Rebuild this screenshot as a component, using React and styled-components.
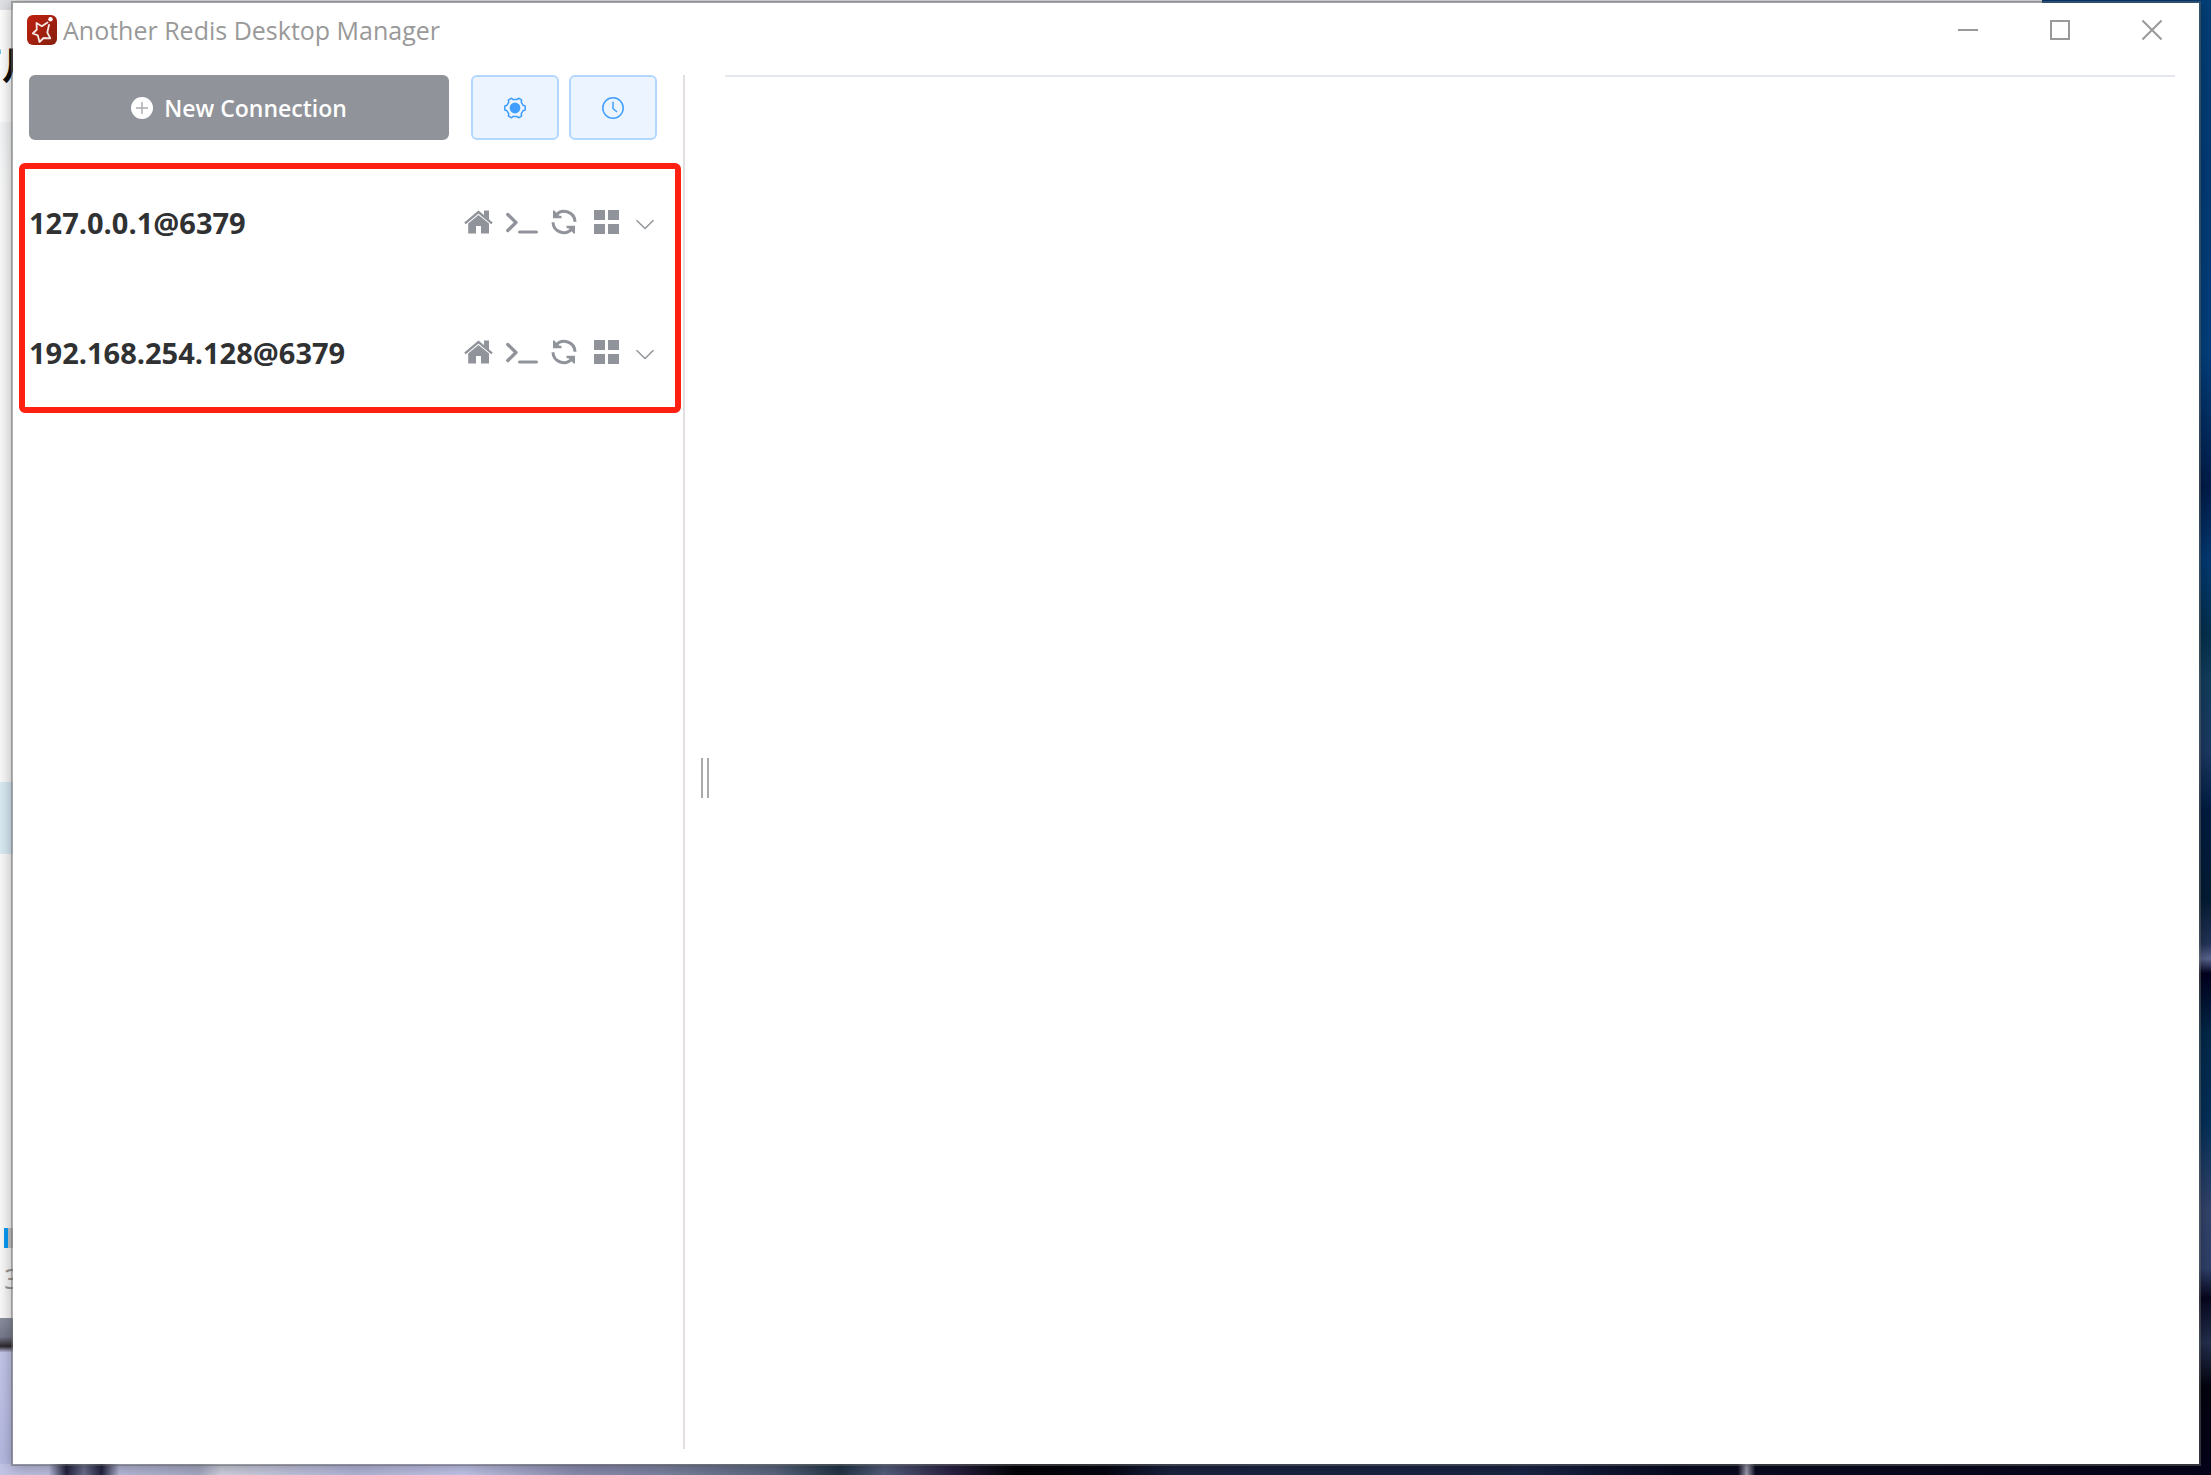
import React from 'react';
import styled, { createGlobalStyle } from 'styled-components';

const GlobalStyle = createGlobalStyle`
  * {
    box-sizing: border-box;
  }
  body {
    margin: 0;
    font-family: "Open Sans", "Noto Sans", "Noto Sans CJK SC", sans-serif;
  }
  button {
    font-family: inherit;
    cursor: pointer;
  }
`;

const Desktop = styled.div`
  position: relative;
  display: flex;
  min-height: 100vh;
  padding: 1px 10px 9px 11px;
  overflow: hidden;
  background:
    linear-gradient(to right, #c3c5e8 0%, #bfc1e2 2.2%, #23233f 3%, #6d7090 3.8%, #23233f 4.6%, #b9bcdc 5.4%, #a9acc6 9%, #d3d5e4 10%, #b7b9de 16%, #c6c9ee 21%, #8f8fb4 26%, #7f86a4 30%, #5c6880 35%, #223548 38%, #56607f 40%, #2b2344 43%, #020206 46%, #050512 50%, #1a2340 53%, #1a2547 69%, #06091f 76%, #0a0a20 78.6%, #a0a0b4 79%, #0a0a20 79.4%, #04031a 100%) bottom / 100% 11px no-repeat,
    linear-gradient(to bottom, #8b90a0 0%, #777a8c 12%, #2c282d 18%, #c4c6ea 22%, #b4b8e0 100%) bottom left / 13px 157px no-repeat,
    linear-gradient(to bottom, #004078 0%, #003c78 12%, #00407e 24%, #001c4a 33%, #003a74 38%, #04304e 43%, #123e5e 46%, #1c3a64 51%, #001c42 55%, #041c34 61%, #243458 64%, #5a6690 65%, #00001e 66%, #02284a 70%, #04305a 76%, #34446c 82%, #30406a 86%, #06061e 88%, #24304e 91%, #03030f 94%, #04031a 100%) right / 12px 100% no-repeat,
    #003d7a;
`;

const BackWindow = styled.div`
  position: absolute;
  top: 0;
  left: 0;
  right: 169px;
  bottom: 157px;
  overflow: hidden;
  background: linear-gradient(to bottom, #dfe1e4 0, #dfe1e4 10px, #fefefe 10px, #fefefe 122px, #f3f5f7 122px, #fafafa 200px);
`;

const BackHeading = styled.div`
  position: absolute;
  top: 36px;
  left: -36px;
  font-size: 38px;
  line-height: 56px;
  font-weight: 700;
  white-space: nowrap;
  color: #111;
`;

const BackSelection = styled.div`
  position: absolute;
  top: 782px;
  left: 0;
  width: 40px;
  height: 72px;
  background: #d9ebf4;
`;

const BackProgress = styled.div`
  position: absolute;
  bottom: 70px;
  left: 4px;
  width: 40px;
  height: 20px;
  background: linear-gradient(to right, #0a9cf5 4px, #c9c9c9 4px);
`;

const BackCount = styled.div`
  position: absolute;
  bottom: 22px;
  left: 4px;
  font-size: 28px;
  line-height: 36px;
  color: #999;
`;

const Window = styled.main`
  position: relative;
  display: flex;
  flex: 1;
  flex-direction: column;
  min-width: 0;
  border: 2px solid rgba(100, 100, 100, 0.5);
  background: #fff;
  background-clip: padding-box;
  box-shadow: 0 2px 14px rgba(0, 0, 0, 0.3);
`;

const TitleBar = styled.header`
  display: flex;
  align-items: center;
  justify-content: space-between;
  height: 54px;
  padding: 0 1px 0 14px;
`;

const AppTitle = styled.h1`
  display: flex;
  align-items: center;
  gap: 6px;
  margin: 0;
  font-size: 25px;
  line-height: 36px;
  font-weight: 400;
  color: #999;
`;

const WindowControls = styled.div`
  display: flex;
  align-self: stretch;
`;

const WindowButton = styled.button`
  display: flex;
  align-items: center;
  justify-content: center;
  width: 92px;
  padding: 0;
  border: none;
  background: none;
  color: #999;
`;

const Body = styled.div`
  display: flex;
  flex: 1;
  padding: 18px 24px 15px 0;
`;

const Sidebar = styled.aside`
  display: flex;
  flex: 0 0 672px;
  flex-direction: column;
  gap: 23px;
  border-right: 2px solid #e3dfe1;
`;

const Toolbar = styled.div`
  display: flex;
  gap: 10px;
  padding: 0 26px 0 16px;
`;

const ToolButton = styled.button`
  display: flex;
  align-items: center;
  justify-content: center;
  width: 88px;
  height: 65px;
  padding: 0;
  border: 2px solid #b3d8ff;
  border-radius: 6px;
  background: #ecf5ff;
  color: #409eff;
`;

const NewButton = styled(ToolButton)`
  flex: 1;
  gap: 11px;
  margin-right: 12px;
  border-color: #909399;
  background: #909399;
  color: #fff;
  font-size: 23px;
  font-weight: 600;
`;

const ConnectionList = styled.ul`
  display: flex;
  flex-direction: column;
  gap: 24px;
  margin: 0 2px 0 6px;
  padding: 0 0 2px;
  border: 6px solid #ff2012;
  border-radius: 6px;
  list-style: none;
`;

const ConnectionRow = styled.li`
  display: flex;
  align-items: center;
  justify-content: space-between;
  height: 106px;
  padding: 0 21px 0 4px;
`;

const ConnectionName = styled.span`
  padding-top: 2px;
  font-size: 29px;
  line-height: 40px;
  font-weight: 700;
  color: #303133;
`;

const ConnectionActions = styled.div`
  display: flex;
  align-items: center;
  gap: 13px;
`;

const ActionButton = styled.button`
  display: flex;
  padding: 0;
  border: none;
  background: none;
  color: #909399;
`;

const DragHandle = styled.div`
  align-self: center;
  width: 8px;
  height: 40px;
  margin: 32px 16px 0;
  border: solid #aaa;
  border-width: 0 2px;
  cursor: col-resize;
`;

const Content = styled.section`
  flex: 1;
  border-top: 2px solid #e4e7ed;
`;

const LogoIcon = () => (
    <svg width="30" height="30" viewBox="0 0 30 30" aria-hidden="true">
        <defs>
            <linearGradient id="logoRed" x1="0" y1="0" x2="1" y2="1">
                <stop offset="0" stopColor="#c0200f" />
                <stop offset="1" stopColor="#86200f" />
            </linearGradient>
        </defs>
        <rect width="30" height="30" rx="6" fill="url(#logoRed)" />
        <path d="M20.500 7.500L14.800 11.200L9.500 8L9.800 14.500L5.800 18.500L10.800 20.300L12.500 27L16.500 23L23.300 23.300L20.300 17.500L22 10" fill="none" stroke="#f4e8e6" strokeWidth="1.800" strokeLinejoin="round" strokeLinecap="round" />
        <circle cx="23.500" cy="4.200" r="2.200" fill="#fff" />
    </svg>
);

const PlusIcon = () => (
    <svg width="22" height="22" viewBox="0 0 22 22" aria-hidden="true">
        <circle cx="11" cy="11" r="11" fill="currentColor" />
        <path d="M5 11H17M11 5V17" stroke="#a9acb1" strokeWidth="1.400" />
    </svg>
);

const GearIcon = () => (
    <svg width="22" height="22" viewBox="0 0 22 22" fill="none" stroke="currentColor" aria-hidden="true">
        <path d="M7.600 1.200L9 2.600H13L14.400 1.200L17.600 3L17.200 5.200L19 8.200L21.200 9V13L19 13.800L17.200 16.800L17.600 19L14.400 20.800L13 19.400H9L7.600 20.800L4.400 19L4.800 16.800L3 13.800L0.800 13V9L3 8.200L4.800 5.200L4.400 3Z" strokeWidth="1.500" strokeLinejoin="round" />
        <circle cx="11" cy="11" r="5.400" fill="currentColor" stroke="none" />
    </svg>
);

const ClockIcon = () => (
    <svg width="22" height="22" viewBox="0 0 22 22" fill="none" stroke="currentColor" aria-hidden="true">
        <circle cx="11" cy="11" r="10.200" strokeWidth="1.500" />
        <path d="M11 4.800V11.500L15 15" strokeWidth="1.500" />
    </svg>
);

const HomeIcon = () => (
    <svg width="29" height="26" viewBox="0 0 29 26" aria-hidden="true">
        <path d="M1 14.300L14.500 3L28 14.300" fill="none" stroke="currentColor" strokeWidth="2.400" />
        <path d="M20 1.500H25V11L20 6.800Z" fill="currentColor" />
        <path d="M4.200 14.500L14.500 6L25 14.500V24.500H17V17H12V24.500H4.200Z" fill="currentColor" />
    </svg>
);

const TerminalIcon = () => (
    <svg width="32" height="26" viewBox="0 0 32 26" fill="none" stroke="currentColor" aria-hidden="true">
        <path d="M1.800 5.500L10 13.500L1.800 21.500" strokeWidth="3.300" strokeLinecap="round" strokeLinejoin="round" />
        <path d="M13.500 23H30.500" strokeWidth="3" strokeLinecap="round" />
    </svg>
);

const RefreshIcon = () => (
    <svg width="26" height="26" viewBox="0 0 26 26" aria-hidden="true">
        <path d="M5 6.200A10.800 10.800 0 0 1 24 12.800" fill="none" stroke="currentColor" strokeWidth="3" />
        <path d="M21 19.800A10.800 10.800 0 0 1 2 13.200" fill="none" stroke="currentColor" strokeWidth="3" />
        <path d="M2 1.500V9.200H10.500V7L8 6.500L5 3.500L3.500 1.500Z" fill="currentColor" />
        <path d="M24 24.500V16.800H15.500V19L18 19.500L21 22.500L22.500 24.500Z" fill="currentColor" />
    </svg>
);

const GridIcon = () => (
    <svg width="33" height="26" viewBox="-4 0 33 26" fill="currentColor" aria-hidden="true">
        <path d="M0 1H11V11H0ZM14 1H25V11H14ZM0 15H11V25H0ZM14 15H25V25H14Z" />
    </svg>
);

const ChevronIcon = () => (
    <svg width="18" height="26" viewBox="0 0 18 26" fill="none" stroke="currentColor" aria-hidden="true">
        <path d="M0.500 11.200L9 19.500L17.500 11.200" strokeWidth="1.500" />
    </svg>
);

const actions = [
    { label: 'Home', Icon: HomeIcon },
    { label: 'Console', Icon: TerminalIcon },
    { label: 'Refresh', Icon: RefreshIcon },
    { label: 'Menu', Icon: GridIcon },
    { label: 'Expand', Icon: ChevronIcon },
];

const connections = ['127.0.0.1@6379', '192.168.254.128@6379'];

function Connection({ name }) {
    return (
        <ConnectionRow>
            <ConnectionName>{name}</ConnectionName>
            <ConnectionActions>
                {actions.map(({ label, Icon }) => (
                    <ActionButton key={label} type="button" aria-label={label}>
                        <Icon />
                    </ActionButton>
                ))}
            </ConnectionActions>
        </ConnectionRow>
    )
}

function App() {
    return (
        <>
            <GlobalStyle />
            <Desktop>
                <BackWindow aria-hidden="true">
                    <BackHeading>可月</BackHeading>
                    <BackSelection />
                    <BackProgress />
                    <BackCount>3</BackCount>
                </BackWindow>
                <Window>
                    <TitleBar>
                        <AppTitle>
                            <LogoIcon />
                            Another Redis Desktop Manager
                        </AppTitle>
                        <WindowControls>
                            <WindowButton type="button" aria-label="Minimize">
                                <svg width="20" height="20" stroke="currentColor" strokeWidth="2"><path d="M0 10H20" /></svg>
                            </WindowButton>
                            <WindowButton type="button" aria-label="Maximize">
                                <svg width="20" height="20" stroke="currentColor" strokeWidth="2" fill="none"><path d="M1 1H19V19H1Z" /></svg>
                            </WindowButton>
                            <WindowButton type="button" aria-label="Close">
                                <svg width="20" height="20" stroke="currentColor" strokeWidth="2"><path d="M0.500 0.500L19.500 19.500M19.500 0.500L0.500 19.500" /></svg>
                            </WindowButton>
                        </WindowControls>
                    </TitleBar>
                    <Body>
                        <Sidebar>
                            <Toolbar>
                                <NewButton type="button">
                                    <PlusIcon />
                                    New Connection
                                </NewButton>
                                <ToolButton type="button" aria-label="Settings"><GearIcon /></ToolButton>
                                <ToolButton type="button" aria-label="Command log"><ClockIcon /></ToolButton>
                            </Toolbar>
                            <ConnectionList>
                                {connections.map(name => <Connection key={name} name={name} />)}
                            </ConnectionList>
                        </Sidebar>
                        <DragHandle />
                        <Content />
                    </Body>
                </Window>
            </Desktop>
        </>
    )
}

export default App;
